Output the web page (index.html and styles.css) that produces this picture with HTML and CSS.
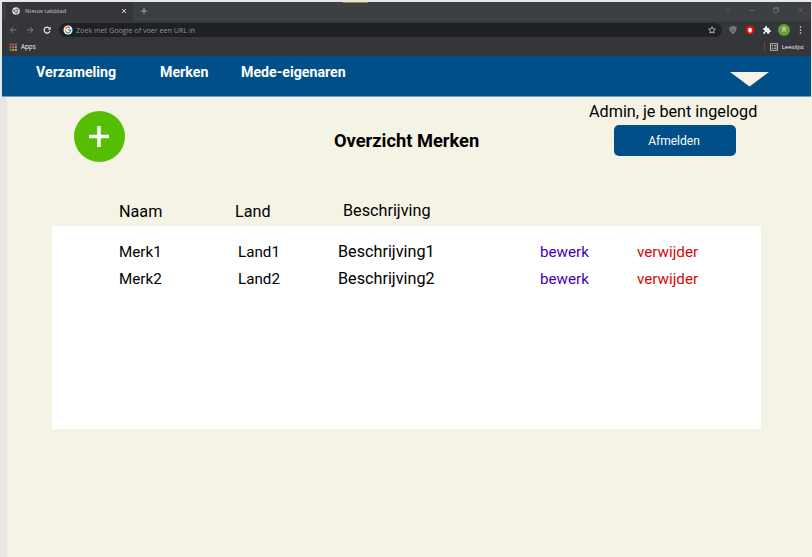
FILE: index.html
```html
<!DOCTYPE html>
<html lang="nl">
<head>
<meta charset="utf-8">
<title>Overzicht Merken</title>
<link rel="stylesheet" href="styles.css">
</head>
<body>
<div class="browser">
  <div class="tabstrip">
    <div class="tab">
      <svg class="tab-logo" viewBox="0 0 16 16"><circle cx="8" cy="8" r="7.5" fill="#e4e5e7"/><circle cx="8" cy="8" r="3.7" fill="#35363a"/><circle cx="8" cy="8" r="2.2" fill="#f1f1f1"/><path d="M8 4.3h7M4.8 9.9 1.5 4.5M11.2 9.9 8 15.3" stroke="#55565a" stroke-width="1.3"/></svg>
      <span class="tab-title">Nieuw tabblad</span>
      <svg class="tab-close" viewBox="0 0 6 6"><path d="M1 1l4 4M5 1 1 5" stroke="#d0d1d3"/></svg>
    </div>
    <svg class="tab-add" viewBox="0 0 8 8"><path d="M4 1v6M1 4h6" stroke="#a0a3a6"/></svg>
    <svg class="window-controls" viewBox="0 0 82 10"><g fill="none" stroke="#696c6e" stroke-width=".8"><path d="m1.500 3.500 2.700 2.700 2.700-2.700M25.500 5.500h5.500M49.500 3.500h4v4h-4zM50.500 3.500v-1h4v4h-1M74 2.700l5 5M79 2.700l-5 5"/></g></svg>
  </div>
  <div class="toolbar">
    <svg class="navigation" viewBox="0 0 44 10"><g fill="none" stroke="#85878a" stroke-width=".9"><path d="M7.500 5H1.500M4.300 2.200 1.500 5l2.800 2.800M18 5h6M21.200 2.200 24 5l-2.800 2.800"/></g><path d="M40.600 3.300A3 3 0 1 0 41 6" fill="none" stroke="#e8e8e8" stroke-width="1.200"/><path d="M41.700 1.700v3h-3z" fill="#e8e8e8"/></svg>
    <div class="omnibox">
      <svg class="google" viewBox="0 0 10 10"><circle cx="5" cy="5" r="4.500" fill="#fff"/><g fill="none" stroke-width="1.300"><path d="M7 3A2.800 2.800 0 0 0 2.600 3.600" stroke="#ea4335"/><path d="M2.600 3.600a2.800 2.800 0 0 0 0 2.800" stroke="#fbbc05"/><path d="M2.600 6.400A2.800 2.800 0 0 0 6.700 7.200" stroke="#34a853"/><path d="M5 5h2.800Q7.700 6.400 6.700 7.200" stroke="#4285f4"/></g></svg>
      <span class="query">Zoek met Google of voer een URL in</span>
      <svg class="star" viewBox="0 0 8 8"><path d="m4 .8 1 2.100 2.300.3-1.700 1.600.4 2.300L4 6 2 7.100l.4-2.300L.7 3.200 3 2.900z" fill="none" stroke="#d5d6d8" stroke-width=".8"/></svg>
    </div>
    <svg class="extensions" viewBox="0 0 82 12"><path d="m6 2 3.700 1.300c0 3-.8 5-3.700 6.700-2.900-1.700-3.700-3.700-3.700-6.700z" fill="#7c7f82"/><path d="M3.500 4.200 8 8M4 7.800 8.500 4" stroke="#4c4e51" stroke-width=".8"/><circle cx="23" cy="6" r="4.300" fill="#ec1008"/><path d="M21.300 6V4.300q.4-.6.8 0 .4-1.300 1 0 .5-.9.9.1.700-.2.700.7v2q-.1 1.500-1.300 1.500h-.9q-1.200-.5-1.200-2.600" fill="#fff"/><path d="M36.300 4h1.700V3.200a1.100 1.100 0 0 1 2.200 0V4h2v2h.6a1.100 1.100 0 0 1 0 2.200h-.6v1.500h-2.100V9a1 1 0 0 0-2 0v.7h-1.800V7.900h.6a.9.900 0 0 0 0-1.800h-.6z" fill="#f1f1f1"/><circle cx="57" cy="6" r="6" fill="#659f36"/><g fill="#e8e8e8"><circle cx="73.500" cy="3" r=".8"/><circle cx="73.500" cy="6" r=".8"/><circle cx="73.500" cy="9" r=".8"/></g><text x="57" y="8.400" class="avatar-letter">R</text></svg>
  </div>
  <div class="bookmarks">
    <svg class="apps-icon" viewBox="0 0 8 8"><path d="M.5.500h2v2h-2zM3.200.500h2v2h-2zM5.900.500h2v2h-2zM.5 3.200h2v2h-2z" fill="#dc4941"/><path d="M3.200 3.200h2v2h-2z" fill="#4285f4"/><path d="M5.900 3.200h2v2h-2zM3.200 5.900h2v2h-2zM5.900 5.900h2v2h-2z" fill="#cf9b28"/><path d="M.5 5.900h2v2h-2z" fill="#38a457"/></svg>
    <span class="apps-label">Apps</span>
    <span class="divider"></span>
    <svg class="list-icon" viewBox="0 0 8 8"><path d="M.5.700h7v6.600h-7z" fill="none" stroke="#d8d8d8" stroke-width=".8"/><path d="M1.800 2.500h1.200M1.800 4h1.200M1.800 5.500h1.200M3.800 2.500h2.700M3.800 4h2.700M3.800 5.500h2.700" stroke="#c8c8c8" stroke-width=".7"/></svg>
    <span class="list-label">Leeslijst</span>
  </div>
</div>
<nav class="navbar">
  <a class="nav-item">Verzameling</a>
  <a class="nav-item">Merken</a>
  <a class="nav-item">Mede-eigenaren</a>
  <svg class="menu-arrow" viewBox="0 0 39 15"><path d="M0 0h39L19.500 14.500z" fill="#f5f3e5"/></svg>
</nav>
<main class="page">
  <header class="page-header">
    <button class="add" aria-label="Toevoegen"><svg viewBox="0 0 20 21"><path d="M10 0v21M0 10.500h20" stroke="#fff" stroke-width="3.600"/></svg></button>
    <h1>Overzicht Merken</h1>
    <div class="account">
      <span class="status">Admin, je bent ingelogd</span>
      <button class="logout">Afmelden</button>
    </div>
  </header>
  <section class="brands">
    <div class="columns"><span>Naam</span><span>Land</span><span class="description">Beschrijving</span></div>
    <div class="rows">
      <div class="row"><span>Merk1</span><span>Land1</span><span class="description">Beschrijving1</span><a class="edit">bewerk</a><a class="delete">verwijder</a></div>
      <div class="row"><span>Merk2</span><span>Land2</span><span class="description">Beschrijving2</span><a class="edit">bewerk</a><a class="delete">verwijder</a></div>
    </div>
  </section>
</main>
</body>
</html>
```
FILE: styles.css
```css
* { box-sizing: border-box; }
body { margin: 0; padding: 2px 1px 0 2px; height: 557px; overflow: hidden; background: #e9e6e6; color: #000; font-family: Roboto, sans-serif; }
svg { display: block; flex: none; }
button { border: 0; padding: 0; font-family: inherit; }
.browser { height: 54px; background: #35363a; font: 6.3px/10px "Open Sans", sans-serif; color: #f0f0f0; }
.tabstrip { display: flex; height: 19px; background: linear-gradient(90deg, transparent 341px, #a88135 341px, #a88135 366px, transparent 366px) 0 0 / 100% 1px no-repeat, #3c4043; }
.tab { display: flex; align-items: center; width: 127px; margin-left: 4px; padding: 0 6px 2px 6px; border-radius: 4px 4px 0 0; background: #35363a; }
.tab-logo { width: 8px; height: 8px; }
.tab-title { margin-left: 5px; color: #c4c5c7; font-size: 6.1px; }
.tab-close { width: 6px; height: 6px; margin-left: auto; }
.tab-add { width: 8px; height: 8px; margin: 5px 0 0 7px; }
.window-controls { width: 82px; height: 10px; margin: 3px 5px 0 auto; }
.toolbar { display: flex; align-items: center; height: 15px; margin-top: 1px; padding-left: 7px; }
.navigation { width: 44px; height: 10px; }
.omnibox { display: flex; align-items: center; width: 663px; height: 14px; margin-left: 6px; padding: 0 6px 0 4px; border-radius: 7px; background: #202124; }
.google { width: 10px; height: 10px; }
.query { margin-left: 3px; color: #929497; font-size: 7.15px; }
.star { width: 8px; height: 8px; margin-left: auto; }
.extensions { width: 82px; height: 12px; margin-left: 5px; }
.avatar-letter { font: 6.5px Roboto, sans-serif; fill: #eee; text-anchor: middle; }
.bookmarks { display: flex; align-items: center; height: 19px; padding: 0 7px 0 7px; }
.apps-icon { width: 8px; height: 8px; }
.apps-label { margin-left: 4px; }
.divider { width: 1px; height: 9px; margin: 0 5px 0 auto; background: #525356; }
.list-icon { width: 8px; height: 8px; margin-right: 4px; }
.list-label { font-size: 6px; }
.navbar { display: grid; grid-template-columns: 124px 81px 489px 39px; height: 41px; padding-left: 34px; border-bottom: 1px solid #75a0b5; background: #004f88; color: #fff; }
.nav-item { margin-top: 7px; font-size: 14.2px; line-height: 18px; font-weight: 700; }
.menu-arrow { width: 39px; height: 15px; margin-top: 15.5px; }
.page { height: 460px; margin: 0 -1px 0 5px; padding-left: 45px; background: #f5f3e5; }
.page-header { display: grid; grid-template-columns: 260px 255px 169px; height: 102px; padding-left: 22px; }
.add { display: grid; place-items: center; width: 51px; height: 51px; margin-top: 14px; padding-right: 1px; border-radius: 50%; background: #55bd03; }
.add svg { width: 20px; height: 21px; }
h1 { margin: 33px 0 0; font-size: 18.3px; line-height: 22px; font-weight: 700; white-space: nowrap; }
.account { display: flex; flex-direction: column; }
.status { margin-top: 5px; font-size: 16.2px; line-height: 20px; white-space: nowrap; }
.logout { width: 122px; height: 31px; margin: 3px 0 0 25px; padding: 0 2px 0 0; border-radius: 5px; background: #004f88; color: #fff; font-size: 12px; }
.brands { width: 709px; font-size: 16.2px; line-height: 20px; }
.columns { display: grid; grid-template-columns: 116px 108px 200px; height: 27px; padding: 3px 0 0 67px; }
.columns .description { margin-top: -1px; }
.rows { height: 203px; padding: 16px 0 0 67px; background: #fff; font-size: 15.2px; }
.row { display: grid; grid-template-columns: 119px 100px 202px 97px 100px; height: 27px; }
.row .description { font-size: 16.2px; }
.edit { color: #4700b3; }
.delete { color: #d50707; }
```
